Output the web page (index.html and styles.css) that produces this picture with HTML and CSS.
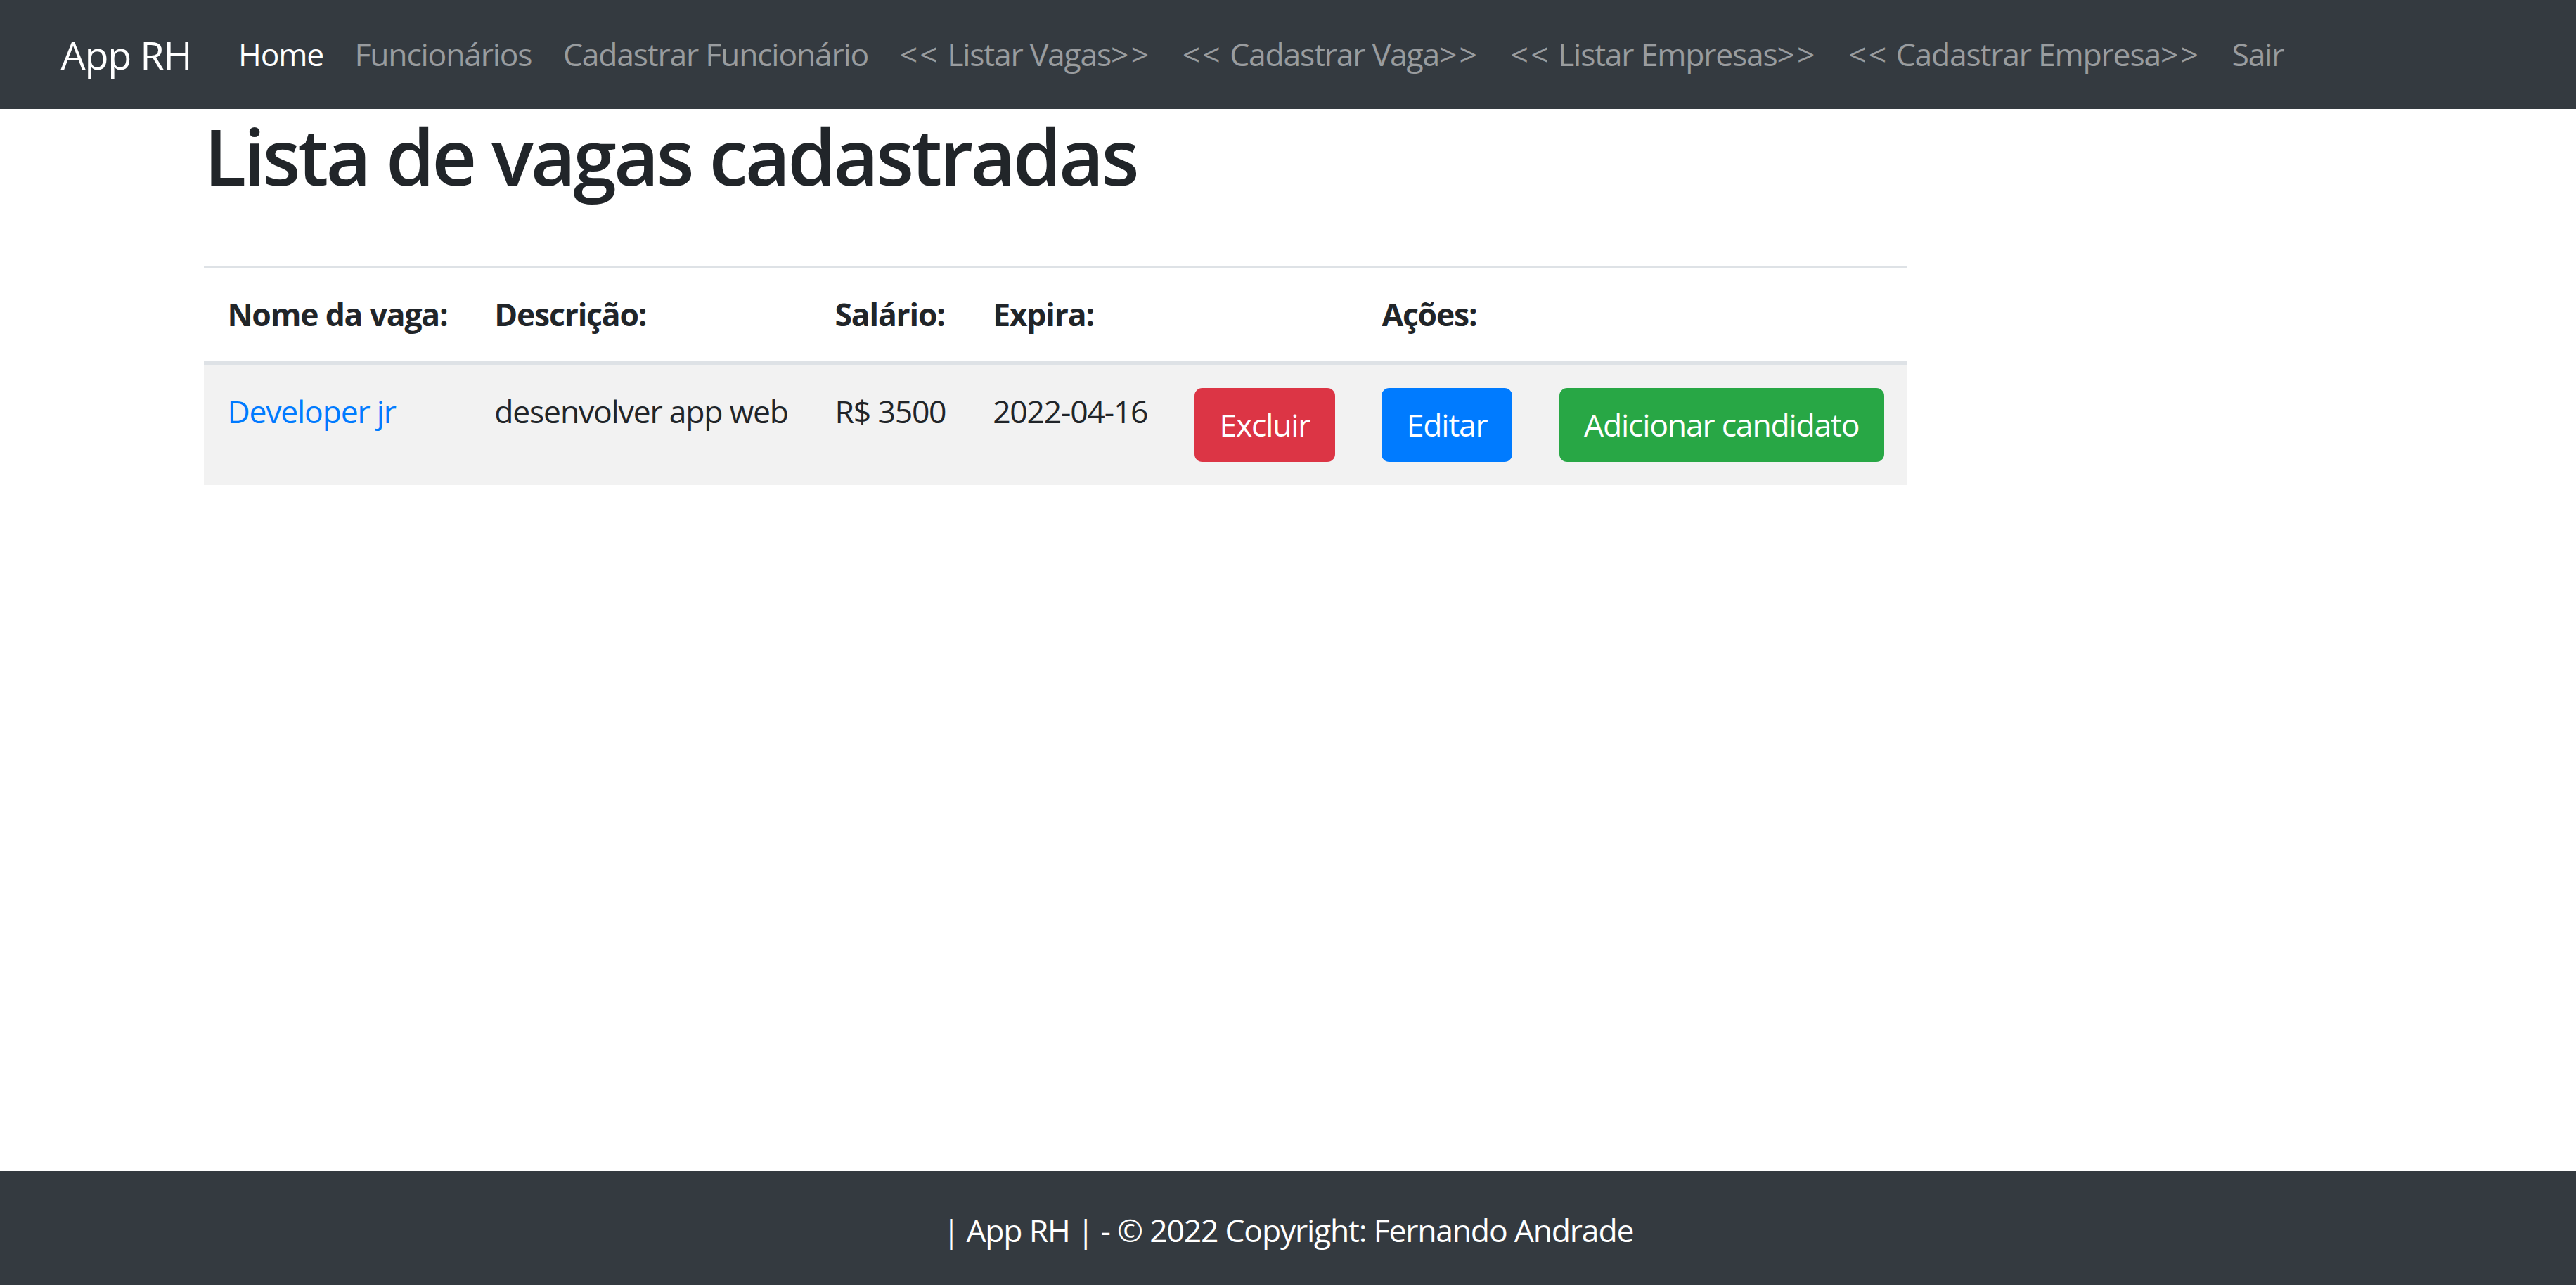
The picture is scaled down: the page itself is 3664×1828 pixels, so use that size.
FILE: index.html
```html
<!DOCTYPE html>
<html lang="pt-BR">
<head>
<meta charset="utf-8">
<title>App RH</title>
<link rel="stylesheet" href="styles.css">
</head>
<body class="page">
<nav class="navbar">
  <div class="nav-inner">
    <a class="brand" href="#">App RH</a>
    <ul class="nav">
      <li><a class="nav-link active" href="#">Home</a></li>
      <li><a class="nav-link" href="#">Funcionários</a></li>
      <li><a class="nav-link" href="#">Cadastrar Funcionário</a></li>
      <li><a class="nav-link" href="#"><span class="ang">&lt;&lt;</span> Listar Vagas<span class="ang">&gt;&gt;</span></a></li>
      <li><a class="nav-link" href="#"><span class="ang">&lt;&lt;</span> Cadastrar Vaga<span class="ang">&gt;&gt;</span></a></li>
      <li><a class="nav-link" href="#"><span class="ang">&lt;&lt;</span> Listar Empresas<span class="ang">&gt;&gt;</span></a></li>
      <li><a class="nav-link" href="#"><span class="ang">&lt;&lt;</span> Cadastrar Empresa<span class="ang">&gt;&gt;</span></a></li>
      <li><a class="nav-link" href="#">Sair</a></li>
    </ul>
  </div>
</nav>
<main class="container">
  <h1 class="title">Lista de vagas cadastradas</h1>
  <table class="table">
    <thead>
      <tr>
        <th>Nome da vaga:</th>
        <th>Descrição:</th>
        <th>Salário:</th>
        <th>Expira:</th>
        <th></th>
        <th>Ações:</th>
        <th></th>
      </tr>
    </thead>
    <tbody>
      <tr class="stripe">
        <td><a class="link" href="#">Developer jr</a></td>
        <td>desenvolver app web</td>
        <td>R$ 3500</td>
        <td>2022-04-16</td>
        <td><a class="btn btn-danger" href="#">Excluir</a></td>
        <td><a class="btn btn-primary" href="#">Editar</a></td>
        <td><a class="btn btn-success" href="#">Adicionar candidato</a></td>
      </tr>
    </tbody>
  </table>
</main>
<footer class="footer">
  <span>| App RH | - © 2022 Copyright: Fernando Andrade</span>
</footer>
</body>
</html>
```
FILE: styles.css
```css
html {
  font-size: 44.5px;
}
* {
  box-sizing: border-box;
}
.page {
  margin: 0;
  min-height: 100vh;
  display: flex;
  flex-direction: column;
  font-family: "Open Sans", "Noto Sans", sans-serif;
  font-size: 1rem;
  line-height: 1.5;
  letter-spacing: -0.027em;
  color: #212529;
  background: #fff;
}
.navbar {
  background: #343a40;
  padding: 0.5rem 1rem;
  height: 155px;
  display: flex;
  align-items: center;
}
.nav-inner {
  display: flex;
  align-items: center;
  padding: 0 42px;
}
.brand {
  color: #fff;
  text-decoration: none;
  font-size: 1.25rem;
  margin-right: 1rem;
  line-height: 1.5;
}
.nav {
  display: flex;
  list-style: none;
  margin: 0;
  padding: 0;
}
.nav-link {
  display: block;
  padding: 0.5rem 0.5rem;
  font-size: 1rem;
  color: rgba(255, 255, 255, 0.5);
  text-decoration: none;
}
.nav-link.active {
  color: #fff;
}
.ang {
  letter-spacing: 0.07em;
}
.container {
  width: 100%;
  padding: 0 290px;
}
.title {
  margin: 0 0 90px;
  font-size: 2.5rem;
  font-weight: 600;
  line-height: 1.2;
  letter-spacing: -0.036em;
}
.table {
  border-collapse: collapse;
  margin-bottom: 1rem;
}
.table th,
.table td {
  padding: 0.75rem;
  vertical-align: top;
  border-top: 2.78px solid #dee2e6;
  text-align: left;
}
.table thead th {
  vertical-align: bottom;
  border-bottom: 5.56px solid #dee2e6;
  font-weight: 700;
}
.stripe td {
  background: #f2f2f2;
}
.link {
  color: #007bff;
  text-decoration: none;
}
.btn {
  display: inline-block;
  padding: 0.375rem 0.75rem;
  border: 2.78px solid transparent;
  border-radius: 0.25rem;
  color: #fff;
  text-decoration: none;
  line-height: 1.5;
  white-space: nowrap;
}
.btn-danger {
  background: #dc3545;
  border-color: #dc3545;
}
.btn-primary {
  background: #007bff;
  border-color: #007bff;
}
.btn-success {
  background: #28a745;
  border-color: #28a745;
}
.footer {
  margin-top: auto;
  background: #343a40;
  color: #fff;
  text-align: center;
  padding: 51px 0 44px;
}
```
